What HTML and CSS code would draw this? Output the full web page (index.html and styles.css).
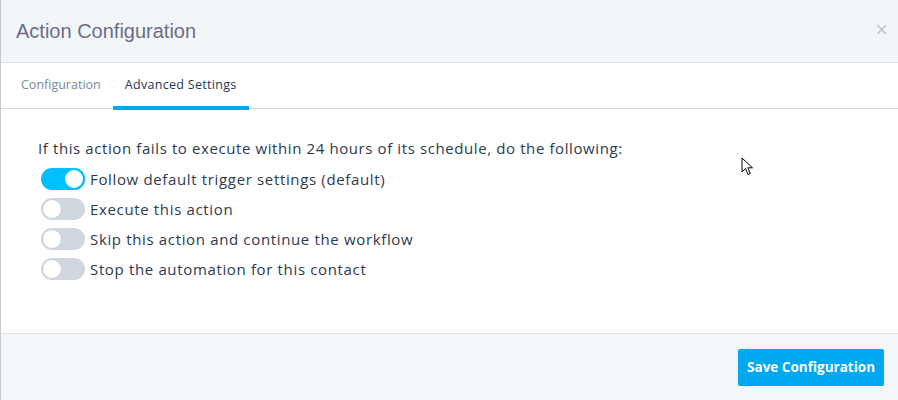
FILE: index.html
```html
<!DOCTYPE html>
<html>
<head>
<meta charset="utf-8">
<link rel="stylesheet" href="styles.css">
</head>
<body>
<div class="modal">
  <div class="header">
    <div class="title">Action Configuration</div>
    <div class="close">&times;</div>
  </div>
  <div class="tabs">
    <div class="tab">Configuration</div>
    <div class="tab active">Advanced Settings</div>
  </div>
  <div class="content">
    <p class="intro">If this action fails to execute within 24 hours of its schedule, do the following:</p>
    <div class="options">
      <div class="option"><span class="toggle on"><span class="knob"></span></span><span>Follow default trigger settings (default)</span></div>
      <div class="option"><span class="toggle"><span class="knob"></span></span><span>Execute this action</span></div>
      <div class="option"><span class="toggle"><span class="knob"></span></span><span>Skip this action and continue the workflow</span></div>
      <div class="option"><span class="toggle"><span class="knob"></span></span><span>Stop the automation for this contact</span></div>
    </div>
    <svg class="cursor" width="14" height="20" viewBox="0 0 14 20"><path d="M1 1 L1 15 L4.5 11.5 L7 17.5 L9.3 16.5 L6.8 10.8 L11.5 10.8 Z" fill="#fff" stroke="#000" stroke-width="1" stroke-linejoin="miter"/></svg>
  </div>
  <div class="footer">
    <button class="save">Save Configuration</button>
  </div>
</div>
</body>
</html>
```
FILE: styles.css
```css
* { box-sizing: border-box; }
html, body { margin: 0; padding: 0; background: #fff; }
body { width: 898px; height: 400px; overflow: hidden; font-family: "Open Sans", "Noto Sans", sans-serif; }
.modal { width: 898px; height: 400px; border-left: 1px solid #c9c9c9; display: flex; flex-direction: column; }
.header { height: 63px; background: #f3f6f8; border-bottom: 1px solid #dfe3e6; display: flex; align-items: center; justify-content: space-between; padding: 0 10px 0 15px; }
.title { font-family: "Liberation Sans", Arial, sans-serif; font-size: 20px; color: #6b6d86; }
.close { font-family: "Liberation Sans", Arial, sans-serif; font-size: 22px; color: #c4c7ca; line-height: 1; margin-top: -2px; }
.tabs { height: 46px; border-bottom: 1px solid #d6dde3; display: flex; padding-left: 8px; }
.tab { padding: 0 12px; display: flex; align-items: center; font-size: 12.5px; color: #7b8a99; height: 46px; padding-bottom: 4px; }
.tab.active { color: #253858; border-bottom: 4px solid #00aaee; padding-bottom: 0; margin-bottom: -1px; height: 47px; letter-spacing: 0.3px; }
.content { flex: 1; position: relative; padding: 29px 37px 0; }
.intro { margin: 0 0 10px; font-size: 15px; letter-spacing: 0.6px; color: #2e3a4e; line-height: 20px; }
.options { display: flex; flex-direction: column; gap: 8px; padding-left: 3px; }
.option { display: flex; align-items: center; gap: 5px; font-size: 15px; letter-spacing: 0.65px; color: #2e3a4e; height: 22px; }
.toggle { width: 44px; height: 22px; border-radius: 11px; background: #d0d7de; position: relative; flex: none; }
.knob { position: absolute; top: 1px; left: 1px; width: 20px; height: 20px; border-radius: 50%; background: #fff; border: 1px solid #c7cfd6; }
.toggle.on { background: #00bfff; }
.toggle.on .knob { left: auto; right: 0; top: 0; width: 22px; height: 22px; border: 2px solid #00bfff; }
.cursor { position: absolute; left: 740px; top: 48px; }
.footer { height: 67px; background: #f4f7f9; border-top: 1px solid #e0e3e6; display: flex; align-items: center; justify-content: flex-end; padding: 0 14px 0 0; }
.save { height: 37px; padding: 0 9px; background: #00a8f0; color: #fff; border: none; border-radius: 2px; font-family: "Open Sans", "Noto Sans", sans-serif; font-weight: 700; font-size: 13.5px; }
```
